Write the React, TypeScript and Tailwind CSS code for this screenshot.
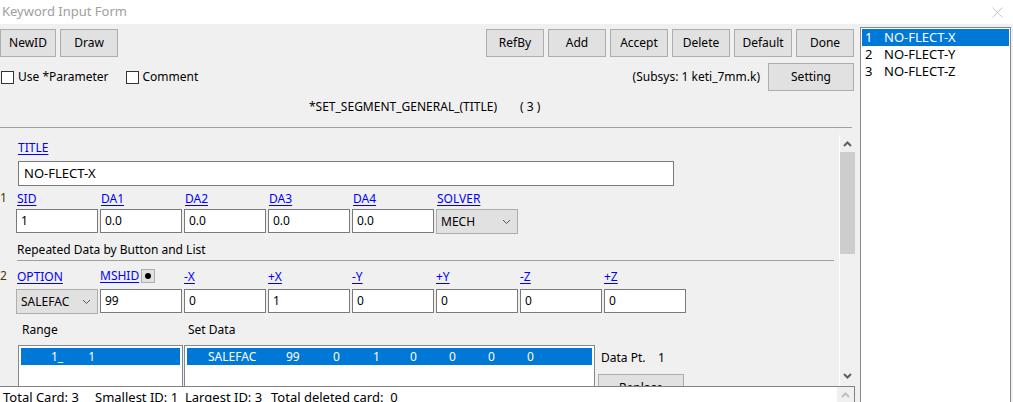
const font = { fontFamily: '"Noto Sans", "Segoe UI", sans-serif' };

function Btn({ label, w = 'w-[58px]', className = '' }: { label: string; w?: string; className?: string }) {
  return (
    <div
      className={`${w} h-[28px] flex items-center justify-center bg-[#e1e1e1] border border-[#adadad] text-[12px] text-black ${className}`}
    >
      {label}
    </div>
  );
}

function Check({ label }: { label: string }) {
  return (
    <div className="flex items-center gap-[4px]">
      <div className="w-[13px] h-[13px] bg-white border border-[#333]" />
      <span className="text-[12px] leading-[16px] text-black">{label}</span>
    </div>
  );
}

function Link({ label }: { label: string }) {
  return <span className="text-[12px] leading-[16px] text-[#0000ff] underline underline-offset-2">{label}</span>;
}

function Field({ value, className = '' }: { value: string; className?: string }) {
  return (
    <div
      className={`w-[82px] h-[24px] shrink-0 bg-white border border-[#7a7a7a] flex items-center pl-[4px] text-[12px] text-black ${className}`}
    >
      {value}
    </div>
  );
}

function Chevron({ className = '' }: { className?: string }) {
  return (
    <svg width="9" height="6" viewBox="0 0 9 6" className={className}>
      <polyline points="1,1 4.5,4.5 8,1" fill="none" stroke="#555" strokeWidth="1" />
    </svg>
  );
}

function Select({ value }: { value: string }) {
  return (
    <div className="w-[82px] h-[25px] shrink-0 bg-[#e1e1e1] border border-[#adadad] flex items-center justify-between pl-[4px] pr-[6px] text-[12px] text-black">
      <span>{value}</span>
      <Chevron />
    </div>
  );
}

function ScrollArrow({ up, color = '#606060' }: { up?: boolean; color?: string }) {
  return (
    <svg width="9" height="6" viewBox="0 0 9 6">
      <polyline
        points={up ? '1,5 4.5,1.5 8,5' : '1,1 4.5,4.5 8,1'}
        fill="none"
        stroke={color}
        strokeWidth="2"
      />
    </svg>
  );
}

export default function App() {
  const row1 = ['SID', 'DA1', 'DA2', 'DA3', 'DA4'];
  const row1v = ['1', '0.0', '0.0', '0.0', '0.0'];
  const row2 = [
    ['-X', '0'],
    ['+X', '1'],
    ['-Y', '0'],
    ['+Y', '0'],
    ['-Z', '0'],
    ['+Z', '0'],
  ];
  const setData = [
    ['SALEFAC', 'w-[78px]'],
    ['99', 'w-[47px]'],
    ['0', 'w-[40px]'],
    ['1', 'w-[37px]'],
    ['0', 'w-[39px]'],
    ['0', 'w-[39px]'],
    ['0', 'w-[39px]'],
    ['0', 'w-[20px]'],
  ];

  return (
    <div className="w-[1013px] h-[402px] overflow-hidden bg-white text-black" style={font}>
      {/* title bar */}
      <div className="h-[24px] flex items-center justify-between pl-[2px] pr-[10px] bg-white">
        <span className="text-[13px] text-[#a0a0a0]">Keyword Input Form</span>
        <svg width="11" height="11" viewBox="0 0 11 11">
          <path d="M0.5 0.5 L10.5 10.5 M10.5 0.5 L0.5 10.5" stroke="#c8c8c8" strokeWidth="1" />
        </svg>
      </div>

      <div className="flex h-[378px] bg-[#f0f0f0]">
        {/* main column */}
        <div className="w-[858px] flex flex-col">
          <div className="h-[104px] shrink-0 flex flex-col">
            <div className="flex justify-between pt-[5px] pr-[4px]">
              <div className="flex gap-[4px]">
                <Btn label="NewID" w="w-[56px]" />
                <Btn label="Draw" />
              </div>
              <div className="flex gap-[4px]">
                {['RefBy', 'Add', 'Accept', 'Delete', 'Default', 'Done'].map((b) => (
                  <Btn key={b} label={b} />
                ))}
              </div>
            </div>
            <div className="flex justify-between items-center mt-[6px] pr-[4px] h-[28px]">
              <div className="flex items-center gap-[17px] pl-[1px]">
                <Check label="Use *Parameter" />
                <Check label="Comment" />
              </div>
              <div className="flex items-center gap-[8px]">
                <span className="text-[12px]">(Subsys: 1 keti_7mm.k)</span>
                <Btn label="Setting" w="w-[86px]" />
              </div>
            </div>
            <div className="h-[32px] flex items-center pl-[309px] text-[12px]">
              <span className="w-[211px]">*SET_SEGMENT_GENERAL_(TITLE)</span>
              <span className="whitespace-pre">( 3 )</span>
            </div>
            <div className="mt-auto w-[852px] h-[1px] bg-[#a0a0a0]" />
          </div>
          <div className="h-[7px] shrink-0" />

          {/* scroll region */}
          <div className="h-[251px] shrink-0 flex overflow-hidden">
            <div className="w-[839px] overflow-hidden">
              <div className="flex flex-col">
                <div className="pl-[18px] pt-[3px] leading-[16px]">
                  <Link label="TITLE" />
                </div>
                <div className="ml-[18px] mt-[5px] w-[656px] h-[25px] bg-white border border-[#7a7a7a] flex items-center pl-[5px] text-[13px]">
                  NO-FLECT-X
                </div>

                <div className="flex mt-[4px] h-[16px] items-center">
                  <span className="w-[16px] text-[12px] leading-[16px] text-[#4a3a00]">1</span>
                  {[...row1, 'SOLVER'].map((l) => (
                    <div key={l} className="w-[84px] pl-[1px] leading-[16px]">
                      <Link label={l} />
                    </div>
                  ))}
                </div>
                <div className="flex pl-[16px] mt-[3px] gap-[2px] items-start">
                  {row1v.map((v, i) => (
                    <Field key={i} value={v} />
                  ))}
                  <Select value="MECH" />
                </div>

                <div className="pl-[17px] mt-[8px] text-[12px] leading-[16px]">Repeated Data by Button and List</div>
                <div className="ml-[17px] mt-[2px] w-[817px] h-[1px] bg-[#a0a0a0]" />

                <div className="flex mt-[7px] h-[16px] items-center">
                  <span className="w-[16px] text-[12px] leading-[16px] text-[#4a3a00]">2</span>
                  <div className="w-[84px] pl-[1px] leading-[16px]">
                    <Link label="OPTION" />
                  </div>
                  <div className="w-[84px] flex items-center gap-[2px] leading-[16px]">
                    <Link label="MSHID" />
                    <div className="w-[14px] h-[14px] bg-[#e1e1e1] border border-[#adadad] flex items-center justify-center">
                      <div className="w-[6px] h-[6px] rounded-full bg-black" />
                    </div>
                  </div>
                  {row2.map(([l]) => (
                    <div key={l} className="w-[84px] leading-[16px]">
                      <Link label={l} />
                    </div>
                  ))}
                </div>
                <div className="flex pl-[16px] mt-[5px] gap-[2px] items-start">
                  <Select value="SALEFAC" />
                  <Field value="99" className="h-[23px]" />
                  {row2.map(([l, v]) => (
                    <Field key={l} value={v} className="h-[23px]" />
                  ))}
                </div>

                <div className="flex mt-[8px] text-[12px] leading-[16px]">
                  <span className="pl-[22px] w-[188px]">Range</span>
                  <span>Set Data</span>
                </div>

                <div className="flex mt-[7px] items-start">
                  <div className="ml-[18px] w-[165px] h-[60px] shrink-0 bg-white border border-[#828790] p-[2px]">
                    <div className="h-[17px] bg-[#0078d7] text-white text-[12px] flex items-center pl-[30px] whitespace-pre">
                      1_        1
                    </div>
                  </div>
                  <div className="ml-[1px] w-[411px] h-[60px] shrink-0 bg-white border border-[#828790] p-[2px]">
                    <div className="h-[17px] bg-[#0078d7] text-white text-[12px] flex items-center pl-[21px]">
                      {setData.map(([v, w], i) => (
                        <span key={i} className={w}>
                          {v}
                        </span>
                      ))}
                    </div>
                  </div>
                  <div className="flex flex-col ml-[6px]">
                    <div className="flex text-[12px] leading-[16px] mt-[5px]">
                      <span className="w-[57px]">Data Pt.</span>
                      <span>1</span>
                    </div>
                    <div className="mt-[8px] -ml-[3px] w-[86px] h-[26px] bg-[#e1e1e1] border border-[#adadad] flex items-start justify-center pt-[4px] text-[12px]">
                      Replace
                    </div>
                  </div>
                </div>
              </div>
            </div>

            {/* vertical scrollbar */}
            <div className="w-[16px] flex flex-col border-l border-white bg-[#f0f0f0]">
              <div className="h-[17px] flex items-center justify-center">
                <ScrollArrow up />
              </div>
              <div className="h-[102px] bg-[#cdcdcd]" />
              <div className="flex-1" />
              <div className="h-[17px] flex items-center justify-center mb-[2px]">
                <ScrollArrow />
              </div>
            </div>
          </div>

          {/* status box */}
          <div className="w-[855px] flex-1 flex bg-white border-t border-r border-[#828282] overflow-hidden">
            <div className="flex-1 flex pl-[3px] pt-[1px] text-[13px] leading-[18px] whitespace-pre">
              <span className="w-[92px]">Total Card: 3</span>
              <span className="w-[90px]">Smallest ID: 1</span>
              <span className="w-[86px]">Largest ID: 3</span>
              <span>Total deleted card:  0</span>
            </div>
            <div className="w-[17px] bg-[#f0f0f0] flex justify-center pt-[5px]">
              <ScrollArrow up color="#c0c0c0" />
            </div>
          </div>
        </div>

        {/* right list */}
        <div className="w-[151px] mt-[3px] ml-[2px] bg-white border border-[#828790] p-[1px] h-[390px]">
          {['NO-FLECT-X', 'NO-FLECT-Y', 'NO-FLECT-Z'].map((n, i) => (
            <div
              key={n}
              className={`h-[17px] flex items-center pl-[3px] text-[13px] ${i === 0 ? 'bg-[#0078d7] text-white' : 'text-black'}`}
            >
              <span className="w-[19px]">{i + 1}</span>
              <span>{n}</span>
            </div>
          ))}
        </div>
      </div>
    </div>
  );
}
